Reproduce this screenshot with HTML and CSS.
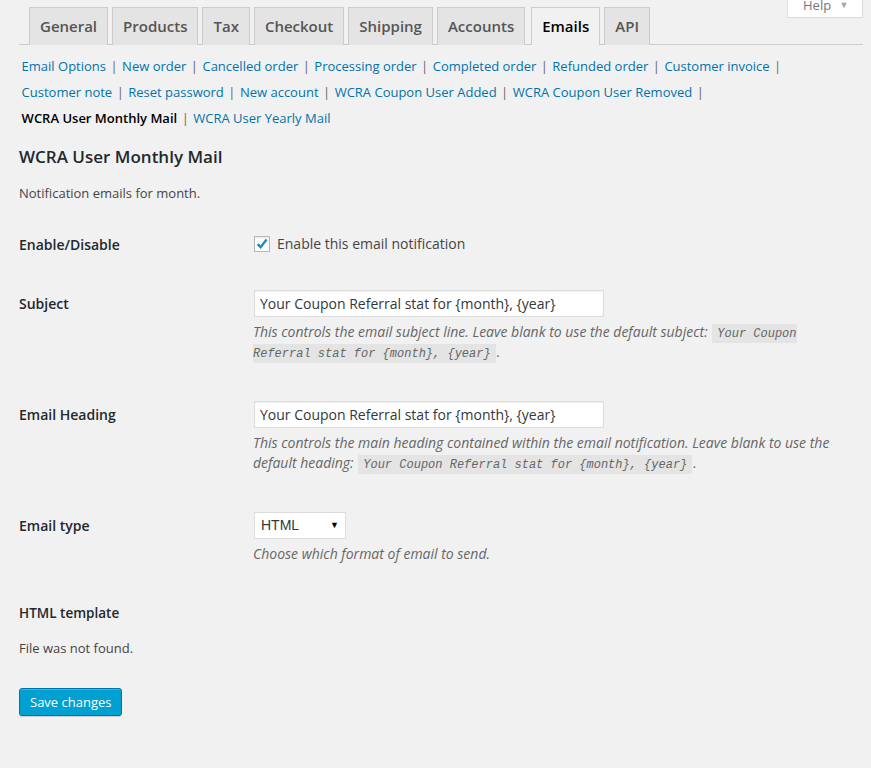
FILE: index.html
```html
<!DOCTYPE html>
<html lang="en">
<head>
<meta charset="utf-8">
<title>Emails settings</title>
<link rel="stylesheet" href="styles.css">
</head>
<body>
<div class="wrap">
  <div class="help-wrap">
    <a class="help-link" href="#">Help <span class="help-arrow">&#9660;</span></a>
  </div>
  <nav class="tabs">
    <a class="tab" href="#">General</a>
    <a class="tab" href="#">Products</a>
    <a class="tab" href="#">Tax</a>
    <a class="tab" href="#">Checkout</a>
    <a class="tab" href="#">Shipping</a>
    <a class="tab" href="#">Accounts</a>
    <a class="tab tab-active" href="#">Emails</a>
    <a class="tab" href="#">API</a>
  </nav>
  <ul class="subsub">
    <li><a href="#">Email Options</a> | </li>
    <li><a href="#">New order</a> | </li>
    <li><a href="#">Cancelled order</a> | </li>
    <li><a href="#">Processing order</a> | </li>
    <li><a href="#">Completed order</a> | </li>
    <li><a href="#">Refunded order</a> | </li>
    <li><a href="#">Customer invoice</a> | </li>
    <li><a href="#">Customer note</a> | </li>
    <li><a href="#">Reset password</a> | </li>
    <li><a href="#">New account</a> | </li>
    <li><a href="#">WCRA Coupon User Added</a> | </li>
    <li><a href="#">WCRA Coupon User Removed</a> | </li>
    <li><a class="current" href="#">WCRA User Monthly Mail</a> | </li>
    <li><a href="#">WCRA User Yearly Mail</a></li>
  </ul>
  <h2 class="title">WCRA User Monthly Mail</h2>
  <p class="intro">Notification emails for month.</p>
  <table class="form-table">
    <tr>
      <th>Enable/Disable</th>
      <td>
        <label class="check-label">
          <span class="checkbox"><svg width="14" height="14" viewBox="0 0 14 14"><path d="M2.6 7.2 L5.6 10.2 L11.6 2.6" fill="none" stroke="#1e8cbe" stroke-width="2.4"/></svg></span>
          Enable this email notification
        </label>
      </td>
    </tr>
    <tr>
      <th>Subject</th>
      <td>
        <div class="input">Your Coupon Referral stat for {month}, {year}</div>
        <p class="description">This controls the email subject line. Leave blank to use the default subject: <code>Your Coupon Referral stat for {month}, {year}</code>.</p>
      </td>
    </tr>
    <tr>
      <th>Email Heading</th>
      <td>
        <div class="input">Your Coupon Referral stat for {month}, {year}</div>
        <p class="description">This controls the main heading contained within the email notification. Leave blank to use the default heading: <code>Your Coupon Referral stat for {month}, {year}</code>.</p>
      </td>
    </tr>
    <tr>
      <th>Email type</th>
      <td>
        <div class="select"><span>HTML</span><span class="sel-arrow">&#9660;</span></div>
        <p class="description">Choose which format of email to send.</p>
      </td>
    </tr>
  </table>
  <h3 class="sub-title">HTML template</h3>
  <p class="note">File was not found.</p>
  <p class="submit"><button class="button-primary" type="button">Save changes</button></p>
</div>
</body>
</html>
```
FILE: styles.css
```css
html, body {
  margin: 0;
  padding: 0;
  background: #f1f1f1;
}
body {
  font-family: "Open Sans", "Liberation Sans", sans-serif;
  font-size: 13px;
  color: #444;
  line-height: 1.4;
}
a { text-decoration: none; }

.wrap {
  position: relative;
  padding: 7px 8px 40px 19px;
}

.help-wrap {
  position: absolute;
  top: -10px;
  right: 8px;
  width: 74px;
  height: 27px;
  background: #fff;
  border: 1px solid #ddd;
  border-top: none;
  box-shadow: 0 1px 1px -1px rgba(0,0,0,.1);
}
.help-link {
  display: block;
  padding-left: 15px;
  line-height: 30px;
  font-size: 13px;
  color: #72777c;
}
.help-arrow {
  font-size: 9px;
  color: #a0a5aa;
  margin-left: 5px;
  vertical-align: 2px;
}

.tabs {
  display: flex;
  gap: 4px;
  padding-left: 10px;
  border-bottom: 1px solid #ccc;
  height: 37px;
}
.tab {
  display: block;
  box-sizing: border-box;
  height: 38px;
  padding: 6px 10px 0;
  border: 1px solid #ccc;
  border-bottom: none;
  background: #e4e4e4;
  color: #555;
  font-size: 15px;
  font-weight: 600;
  line-height: 24px;
}
.tab-active {
  background: #f1f1f1;
  color: #000;
  margin-left: 2px;
}

.subsub {
  list-style: none;
  margin: 8px 0 0;
  padding: 0;
  display: flex;
  flex-wrap: wrap;
  font-size: 13px;
  color: #666;
  line-height: 26px;
}
.subsub li {
  white-space: pre;
  word-spacing: -1.5px;
}
.subsub a {
  color: #0073aa;
  padding: 0 .2em;
  word-spacing: 0;
}
.subsub a.current {
  color: #000;
  font-weight: 600;
}

.title {
  font-size: 17px;
  font-weight: 600;
  color: #23282d;
  margin: 15px 0 0;
  line-height: 22px;
}
.intro {
  margin: 15px 0 0;
  line-height: 20px;
}

.form-table {
  border-collapse: collapse;
  margin-top: 12px;
  width: 100%;
}
.form-table th {
  width: 200px;
  text-align: left;
  vertical-align: top;
  padding: 20px 24px 20px 0;
  font-size: 14px;
  font-weight: 600;
  color: #23282d;
  line-height: 19px;
}
.form-table td {
  vertical-align: top;
  padding: 16px 10px 15px;
  font-size: 14px;
  line-height: 19px;
}

.check-label {
  display: flex;
  align-items: center;
  gap: 7px;
  color: #444;
  margin-top: 3px;
}
.checkbox {
  display: flex;
  align-items: center;
  justify-content: center;
  box-sizing: border-box;
  width: 16px;
  height: 16px;
  margin-left: 1px;
  background: #fff;
  border: 1px solid #b4b9be;
  box-shadow: inset 0 1px 2px rgba(0,0,0,.1);
}

.input {
  box-sizing: border-box;
  width: 350px;
  height: 27px;
  margin: 0 0 0 1px;
  padding: 0 5px;
  background: #fff;
  border: 1px solid #ddd;
  box-shadow: inset 0 1px 2px rgba(0,0,0,.07);
  color: #32373c;
  font-size: 14px;
  line-height: 25px;
}

.description {
  margin: 5px 0 8px;
  font-size: 14px;
  font-style: italic;
  color: #666;
  line-height: 20px;
}
.description code {
  font-family: "Liberation Mono", "DejaVu Sans Mono", monospace;
  font-size: 12px;
  line-height: 12px;
  background: #e4e4e4;
  padding: 3px 5px 2px;
  margin: 0 1px;
}

.select {
  display: flex;
  justify-content: space-between;
  align-items: center;
  box-sizing: border-box;
  width: 92px;
  height: 27px;
  margin-left: 1px;
  padding: 0 6px 0 6px;
  background: #fff;
  border: 1px solid #ddd;
  color: #32373c;
  font-size: 14px;
  font-family: "Liberation Sans", Arial, sans-serif;
}
.sel-arrow {
  font-size: 9px;
  color: #000;
}

.sub-title {
  font-size: 13.5px;
  font-weight: 600;
  color: #23282d;
  margin: 16px 0 0;
  line-height: 20px;
}
.note {
  margin: 15px 0 0;
  line-height: 20px;
}
.submit {
  margin: 30px 0 0;
}
.button-primary {
  box-sizing: border-box;
  height: 28px;
  padding: 0 10px 1px;
  background: #00a0d2;
  border: 1px solid #0073aa;
  border-radius: 3px;
  box-shadow: inset 0 1px 0 rgba(120,200,230,.5), 0 1px 0 rgba(0,0,0,.15);
  color: #fff;
  font-family: "Open Sans", "Liberation Sans", sans-serif;
  font-size: 13px;
  line-height: 26px;
}
```
